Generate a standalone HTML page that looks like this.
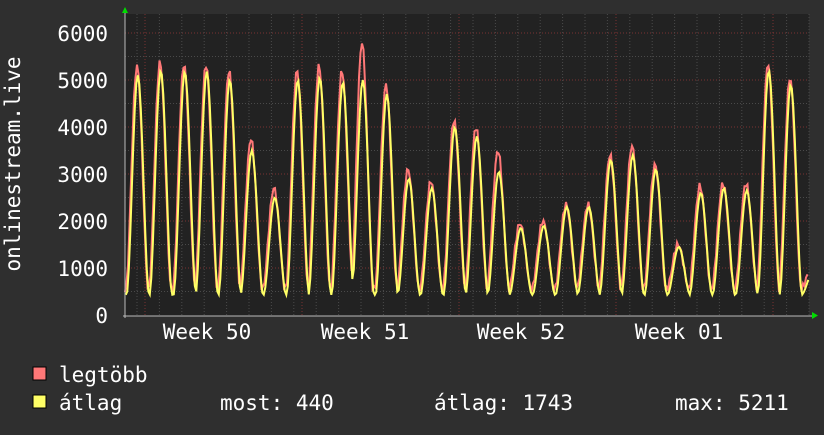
<!DOCTYPE html>
<html><head><meta charset="utf-8"><style>
html,body{margin:0;padding:0;background:#2f2f2f;}
body{width:824px;height:430px;overflow:hidden;}
text{font-family:"DejaVu Sans Mono","Liberation Mono",monospace;fill:#fff;}
</style></head><body>
<svg id="s" width="824" height="430" xmlns="http://www.w3.org/2000/svg">
<rect x="0" y="0" width="824" height="430" fill="#2f2f2f"/>
<rect x="125" y="14" width="684" height="302" fill="#222"/>
<g id="grid"></g>
<polyline id="mx" fill="none" stroke="#ff7777" stroke-width="2" points=""/>
<polyline id="av" fill="none" stroke="#ffff66" stroke-width="2" points=""/>
<line x1="123" y1="316" x2="812" y2="316" stroke="#bbb" stroke-width="1"/>
<line x1="125" y1="12" x2="125" y2="318" stroke="#bbb" stroke-width="1"/>
<polygon points="122,13 128,13 125,7" fill="#00dd00"/>
<polygon points="812,312 812,319 818,315.5" fill="#00dd00"/>
<g font-size="21" text-anchor="end">
<text x="108" y="41">6000</text><text x="108" y="88">5000</text><text x="108" y="135">4000</text>
<text x="108" y="182">3000</text><text x="108" y="229">2000</text><text x="108" y="276">1000</text>
<text x="108" y="323">0</text></g>
<g font-size="21" text-anchor="middle">
<text x="207" y="339">Week 50</text><text x="365" y="339">Week 51</text>
<text x="521" y="339">Week 52</text><text x="679" y="339">Week 01</text></g>
<text font-size="21" transform="translate(20,164) rotate(-90)" text-anchor="middle">onlinestream.live</text>
<rect x="33" y="367" width="13" height="13" fill="#ff7777" stroke="#000" stroke-width="1"/>
<rect x="33" y="395" width="13" height="13" fill="#ffff66" stroke="#000" stroke-width="1"/>
<g font-size="21"><text x="59" y="382">legtöbb</text><text x="59" y="410">átlag</text>
<text x="220" y="410">most: 440</text><text x="434" y="410">átlag: 1743</text><text x="675" y="410">max: 5211</text></g>
</svg>
<script>
var g=document.getElementById('grid'),h='';
function Y(v){return 315-v*0.047;}
for(var v=500;v<=6000;v+=500){var y=Y(v);h+='<line x1="125" x2="809" y1="'+y+'" y2="'+y+'" stroke="'+(v%1000?'#4a4a4a':'#7a3333')+'" stroke-dasharray="1,2"/>';}
for(var x=137;x<809;x+=22.4){h+='<line y1="14" y2="316" x1="'+x+'" x2="'+x+'" stroke="#4a4a4a" stroke-dasharray="1,2"/>';}
[145,302,459,616,773].forEach(function(x){h+='<line y1="14" y2="316" x1="'+x+'" x2="'+x+'" stroke="#7a3333" stroke-dasharray="1,2"/>';});
g.innerHTML=h;
var P=[[137,5300,5100],[160,5380,5200],[184,5340,5180],[206,5330,5180],[229,5200,5000],[251,3750,3500],[274,2700,2500],[297,5200,5000],[319,5300,5050],[342,5200,4950],[362,5800,5000],[386,4900,4700],[408,3100,2900],[431,2850,2700],[454,4150,4000],[476,4000,3800],[498,3500,3050],[520,1950,1850],[543,2000,1900],[566,2350,2300],[588,2350,2300],[610,3400,3300],[632,3600,3400],[655,3200,3100],[678,1500,1450],[700,2750,2600],[723,2800,2700],[746,2800,2650],[768,5350,5200],[790,5050,4900],[812,1000,900]];
function val(x,k){
 var i=0;while(i<P.length-1&&P[i+1][0]<x)i++;
 var a=P[i],b=P[i+1]||a,best=0,base=(k==1?550:430);
 [a,b].forEach(function(p){var d=(x-p[0])/11.2;if(Math.abs(d)<1){var f=Math.pow((1+Math.cos(Math.PI*d))/2,0.9);best=Math.max(best,f*(p[k]-base));}});
 return base+best;}
var m='',a='';
for(var x=125;x<=808;x+=1.5){var n=Math.sin(x*1.7)*70;m+=x+','+Y(val(x,1)+n).toFixed(1)+' ';a+=(x+0.8)+','+Y(val(x,2)).toFixed(1)+' ';}
document.getElementById('mx').setAttribute('points',m);
document.getElementById('av').setAttribute('points',a);
</script>
</body></html>
